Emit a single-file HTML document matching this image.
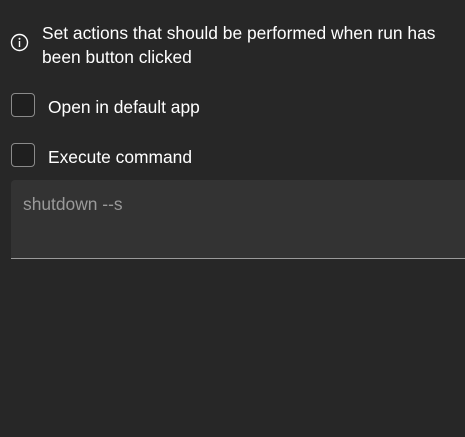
<!DOCTYPE html>
<html><head><style>
body{margin:0;width:465px;height:437px;background:#272727;font-family:"Liberation Sans",sans-serif;color:#fff;overflow:hidden;position:relative}
.t{position:absolute;font-size:17.4px;line-height:24px}
.cb{position:absolute;left:11px;width:22px;height:22px;border:1px solid #8a8a8a;border-radius:4px;background:#1f1f1f}
.ta{position:absolute;left:11px;top:180px;width:470px;height:78px;background:#333;border-bottom:1px solid #9a9a9a;border-radius:4px 0 0 0}
</style></head><body>
<svg style="position:absolute;left:10px;top:33px" width="19" height="19" viewBox="0 0 19 19"><circle cx="9.5" cy="9.5" r="8" fill="none" stroke="#fff" stroke-width="1.4"/><circle cx="9.5" cy="5.8" r="1" fill="#fff"/><rect x="8.8" y="8" width="1.4" height="6" fill="#fff"/></svg>
<div class="t" style="left:42px;top:21px">Set actions that should be performed when run has<br>been button clicked</div>
<div class="cb" style="top:93px"></div>
<div class="t" style="left:48px;top:95px">Open in default app</div>
<div class="cb" style="top:143px"></div>
<div class="t" style="left:48px;top:145px">Execute command</div>
<div class="ta"></div>
<div class="t" style="left:23px;top:192px;color:#9a9a9a">shutdown --s</div>
</body></html>
